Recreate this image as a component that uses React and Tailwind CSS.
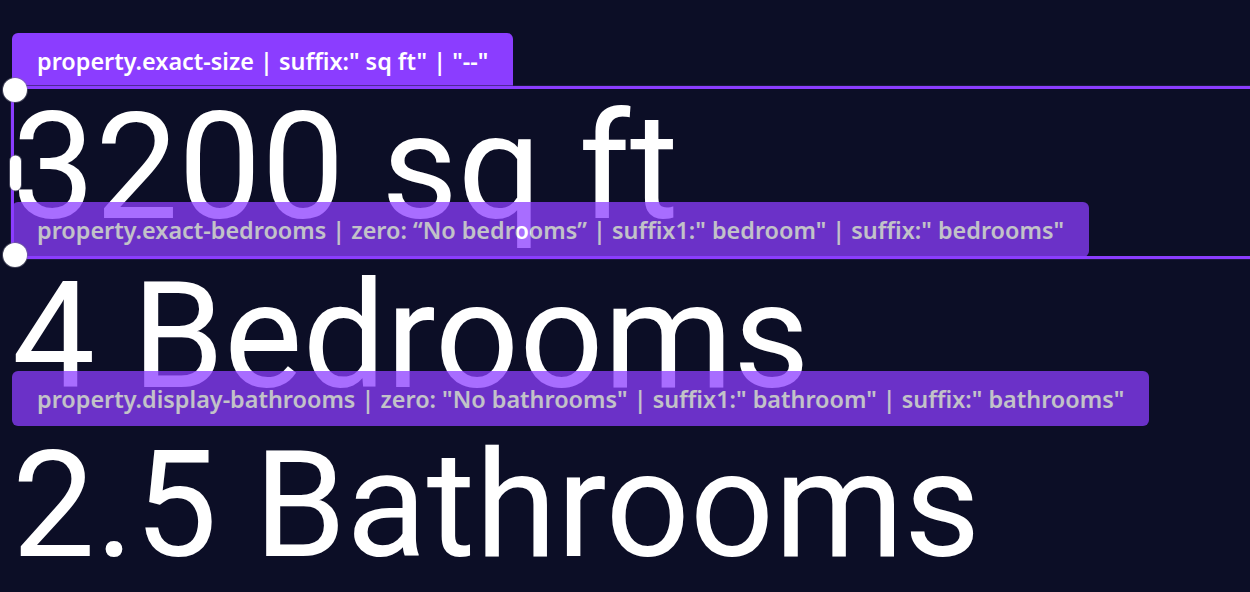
import React from "react";

const rows = [
  {
    id: "size",
    label: 'property.exact-size | suffix:" sq ft" | "--"',
    value: "3200 sq ft",
    selected: true,
  },
  {
    id: "bedrooms",
    label:
      'property.exact-bedrooms | zero: \u201cNo bedrooms\u201d | suffix1:" bedroom" | suffix:" bedrooms"',
    value: "4 Bedrooms",
  },
  {
    id: "bathrooms",
    label:
      'property.display-bathrooms | zero: "No bathrooms" | suffix1:" bathroom" | suffix:" bathrooms"',
    value: "2.5 Bathrooms",
  },
];

function Handle({ className }) {
  return (
    <span
      className={`absolute h-6 w-6 rounded-full bg-white shadow-[0_0_0_1px_rgba(120,120,140,0.5)] ${className}`}
    />
  );
}

function SelectionFrame() {
  return (
    <div className="pointer-events-none absolute left-[-1px] top-[53px] z-20 h-[173px] w-[1320px] border-[3px] border-[#8b3dff] shadow-[0_0_0_1px_rgba(40,30,80,0.6)]">
      <Handle className="-left-[11px] -top-[11px]" />
      <Handle className="-bottom-[11px] -left-[11px]" />
      <span className="absolute -left-[4px] top-1/2 h-[35px] w-[11px] -translate-y-1/2 rounded-full bg-white shadow-[0_0_0_1px_rgba(120,120,140,0.5)]" />
    </div>
  );
}

function FieldRow({ row }) {
  return (
    <div className="relative h-[169px]">
      <div
        className={`inline-flex h-[55px] items-center px-[25px] pt-[3px] font-['Noto_Sans',sans-serif] text-[23.4px] font-semibold text-white ${
          row.selected ? "rounded-t-[6px] bg-[#8b3dff]" : "relative z-10 rounded-[6px] bg-[#8b3dff] opacity-75"
        }`}
      >
        <span className="whitespace-nowrap">{row.label}</span>
      </div>
      <div className="mt-[6px] whitespace-nowrap font-['Roboto',sans-serif] text-[148px] font-normal leading-none text-white">
        {row.value}
      </div>
      {row.selected && <SelectionFrame />}
    </div>
  );
}

export default function App() {
  return (
    <div className="h-[592px] w-[1250px] overflow-hidden bg-[#0c0e26] pl-[12px] pt-[33px]">
      {rows.map((row) => (
        <FieldRow key={row.id} row={row} />
      ))}
    </div>
  );
}
